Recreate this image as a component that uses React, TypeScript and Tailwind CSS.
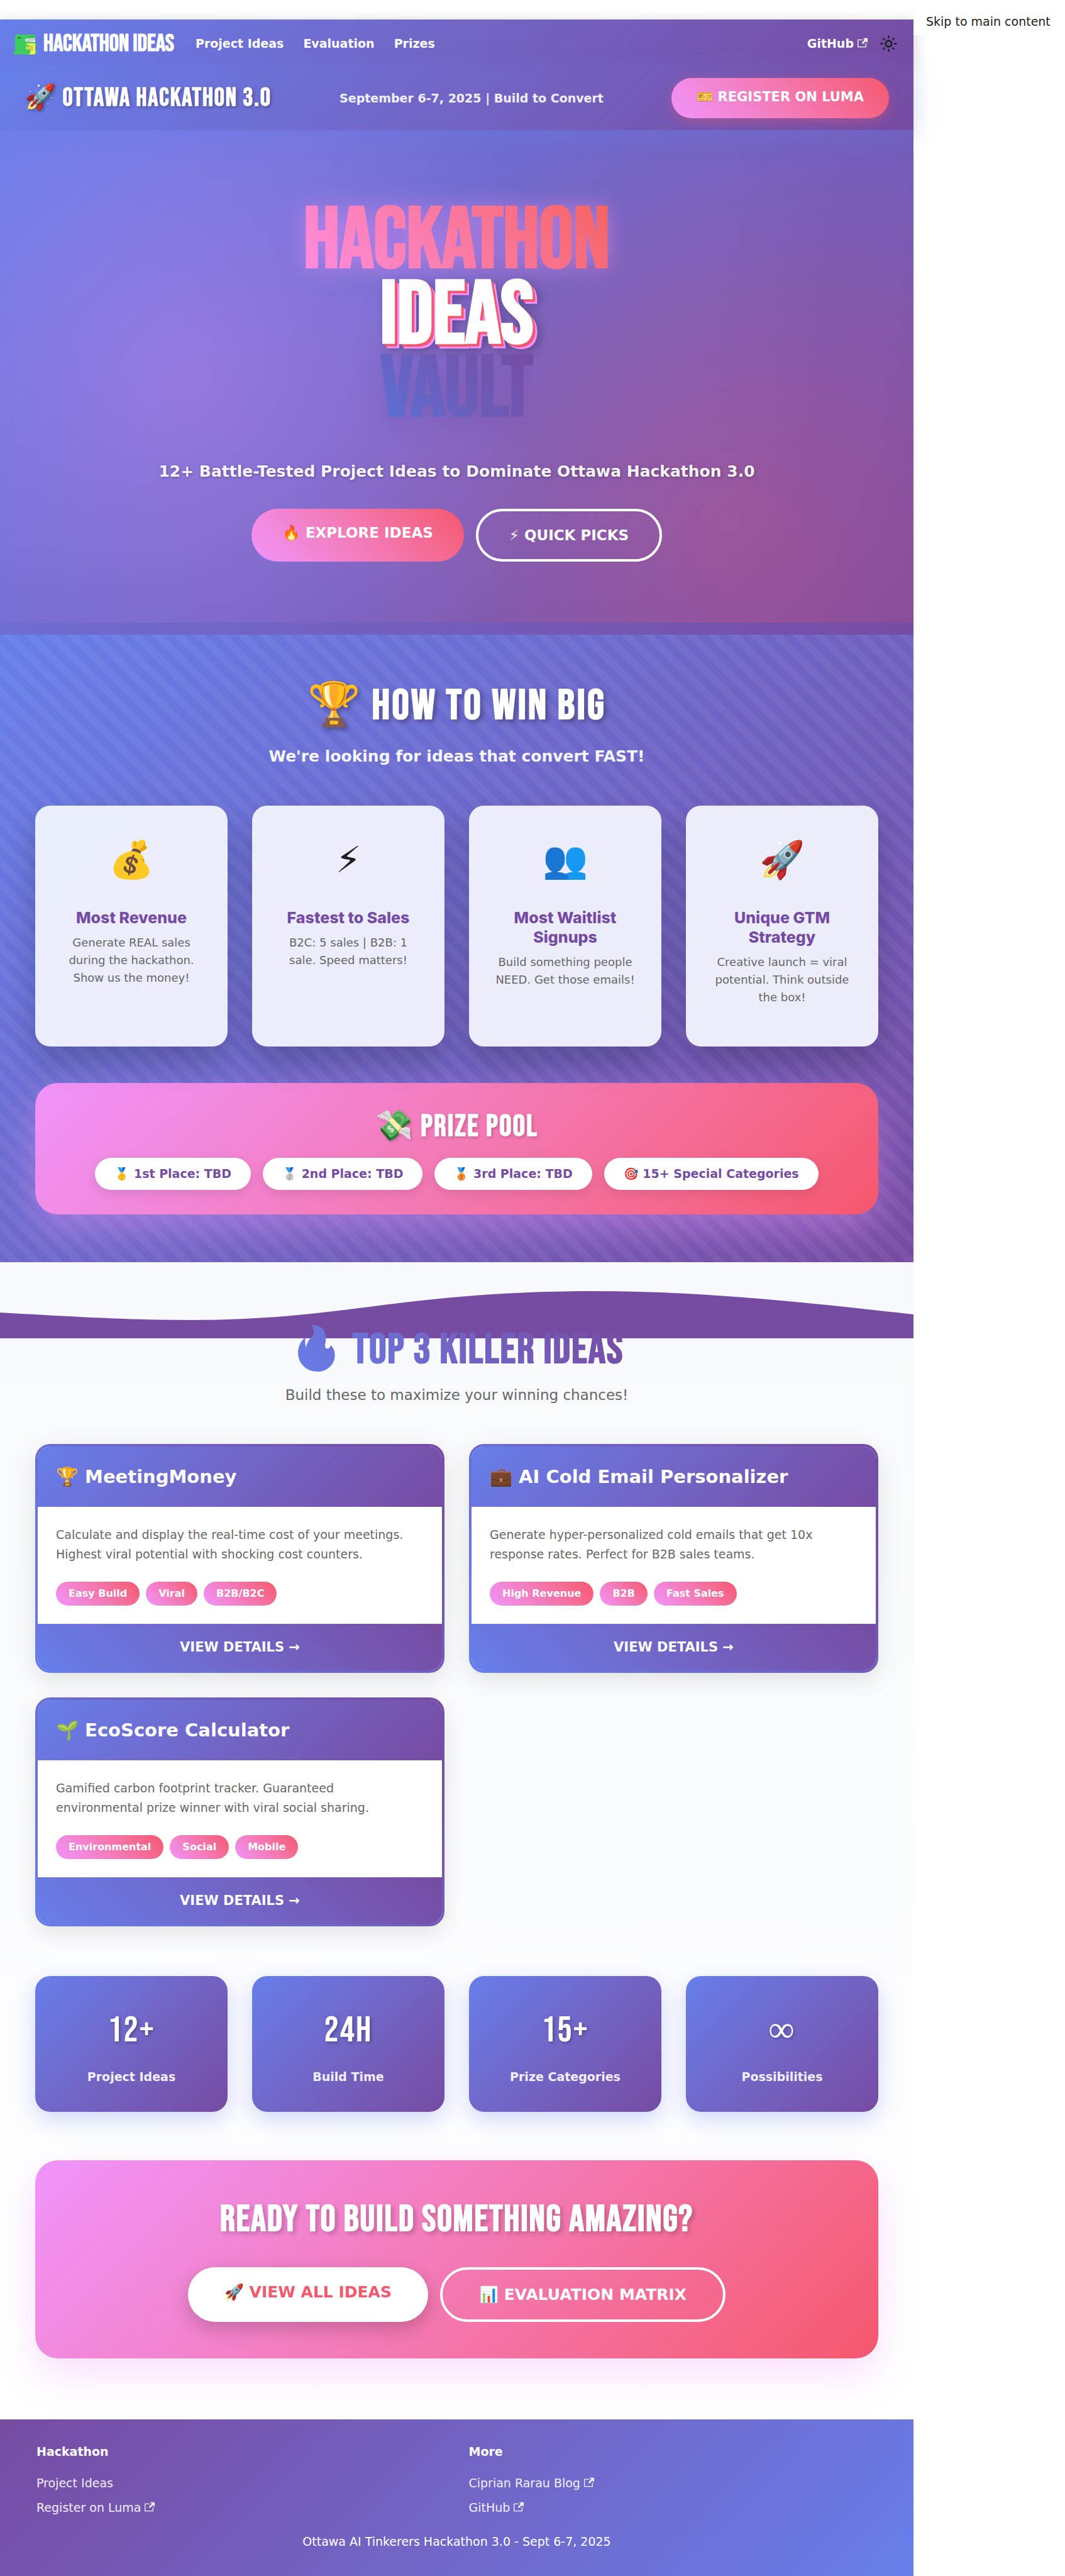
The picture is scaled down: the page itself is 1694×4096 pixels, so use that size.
function DinoLogo() {
  return (
    <svg viewBox="36 68 192 192" className="size-[39px]" aria-hidden="true">
      <path d="M57 104q0-12 12-12l3-3 4 3 4-3 4 3 4-3 4 3 4-3 4 3h101q12 0 12 12v20l-78 4v16h80v92q0 12-12 12H60q-14 0-18-12-2-6-5-8 2-6 9-2 6 4 9 4l3-6-4-4 4-4-4-4 4-4-4-4 4-4-4-4 4-4-4-4 4-4-4-4 4-4-4-4 4-4-4-4 4-4-4-4 4-4-4-4z" fill="#3ecc5f" />
      <path d="M213 162q11 4 9 16-1 10-9 12zM213 212q14 4 14 16 0 10-14 10z" fill="#44d860" />
      <path d="M135 248V160h78v76q0 12-12 12z" fill="#3ecc5f" />
      <path d="M142 162h66q4 0 4 5v72q0 8-7 8h-63z" fill="#ffff50" />
      <path d="M150 181h48M150 190h48M148 200h52M150 209h48M160 219h38" stroke="#36352f" strokeWidth="2" />
      <path d="M135 166q14 0 20 6 10 0 11 9-1 8-12 8-12 0-19-6z" fill="#44d860" />
      <path d="M133 214q8-8 20-7 22 2 23 20 0 20-24 21h-19z" fill="#3ecc5f" />
      <path d="M213 122l-70 4q-8 1-8 10 0 11 8 11l70 2z" fill="#fff" />
      <path d="M145 142l8-10 5 9 8-11 6 10 7-11 7 11 7-11 6 10 8-12 5 9" fill="none" stroke="#222" strokeWidth="2.5" />
      <path d="M77 125q1-12 11-12t11 11" fill="none" stroke="#111" strokeWidth="4" strokeLinecap="round" />
      <circle cx="173" cy="109" r="2.6" fill="#111" />
      <circle cx="193" cy="107" r="2.6" fill="#111" />
    </svg>
  );
}

function ExternalIcon() {
  return (
    <svg viewBox="0 0 24 24" className="ml-1.5 inline-block size-4 align-baseline" fill="currentColor" aria-hidden="true">
      <path d="M21 13v10h-21v-19h12v2h-10v15h17v-8h2zm3-12h-10.988l4.035 4-6.977 7.07 2.828 2.828 6.977-7.07 4.125 4.172v-11z" />
    </svg>
  );
}

function SunIcon() {
  return (
    <svg viewBox="0 0 24 24" className="size-[29px]" fill="currentColor" aria-hidden="true">
      <path d="M12,9c1.65,0,3,1.35,3,3s-1.35,3-3,3s-3-1.35-3-3S10.35,9,12,9 M12,7c-2.76,0-5,2.24-5,5s2.24,5,5,5s5-2.24,5-5 S14.76,7,12,7L12,7z M2,13l2,0c0.55,0,1-0.45,1-1s-0.45-1-1-1l-2,0c-0.55,0-1,0.45-1,1S1.45,13,2,13z M20,13l2,0c0.55,0,1-0.45,1-1 s-0.45-1-1-1l-2,0c-0.55,0-1,0.45-1,1S19.45,13,20,13z M11,2v2c0,0.55,0.45,1,1,1s1-0.45,1-1V2c0-0.55-0.45-1-1-1S11,1.45,11,2z M11,20v2c0,0.55,0.45,1,1,1s1-0.45,1-1v-2c0-0.55-0.45-1-1-1C11.45,19,11,19.45,11,20z M5.99,4.58c-0.39-0.39-1.03-0.39-1.41,0 c-0.39,0.39-0.39,1.03,0,1.41l1.06,1.06c0.39,0.39,1.03,0.39,1.41,0s0.39-1.03,0-1.41L5.99,4.58z M18.36,16.95 c-0.39-0.39-1.03-0.39-1.41,0c-0.39,0.39-0.39,1.03,0,1.41l1.06,1.06c0.39,0.39,1.03,0.39,1.41,0c0.39-0.39,0.39-1.03,0-1.41 L18.36,16.95z M19.42,5.99c0.39-0.39,0.39-1.03,0-1.41c-0.39-0.39-1.03-0.39-1.41,0l-1.06,1.06c-0.39,0.39-0.39,1.03,0,1.41 s1.03,0.39,1.41,0L19.42,5.99z M7.05,18.36c0.39-0.39,0.39-1.03,0-1.41c-0.39-0.39-1.03-0.39-1.41,0l-1.06,1.06 c-0.39,0.39-0.39,1.03,0,1.41s1.03,0.39,1.41,0L7.05,18.36z" />
    </svg>
  );
}

const criteria = [
  { icon: "💰", title: "Most Revenue", text: "Generate REAL sales during the hackathon. Show us the money!" },
  { icon: "⚡", title: "Fastest to Sales", text: "B2C: 5 sales | B2B: 1 sale. Speed matters!" },
  { icon: "👥", title: "Most Waitlist Signups", text: "Build something people NEED. Get those emails!" },
  { icon: "🚀", title: "Unique GTM Strategy", text: "Creative launch = viral potential. Think outside the box!" },
];

const prizes = ["🥇 1st Place: TBD", "🥈 2nd Place: TBD", "🥉 3rd Place: TBD", "🎯 15+ Special Categories"];

const ideas = [
  {
    title: "🏆 MeetingMoney",
    text: "Calculate and display the real-time cost of your meetings. Highest viral potential with shocking cost counters.",
    tags: ["Easy Build", "Viral", "B2B/B2C"],
  },
  {
    title: "💼 AI Cold Email Personalizer",
    text: "Generate hyper-personalized cold emails that get 10x response rates. Perfect for B2B sales teams.",
    tags: ["High Revenue", "B2B", "Fast Sales"],
  },
  {
    title: "🌱 EcoScore Calculator",
    text: "Gamified carbon footprint tracker. Guaranteed environmental prize winner with viral social sharing.",
    tags: ["Environmental", "Social", "Mobile"],
  },
];

const stats = [
  { value: "12+", label: "Project Ideas" },
  { value: "24H", label: "Build Time" },
  { value: "15+", label: "Prize Categories" },
  { value: <span className="font-['Liberation_Serif',serif] leading-none">∞</span>, label: "Possibilities" },
];

const footerColumns = [
  { title: "Hackathon", links: [{ label: "Project Ideas", external: false }, { label: "Register on Luma", external: true }] },
  { title: "More", links: [{ label: "Ciprian Rarau Blog", external: true }, { label: "GitHub", external: true }] },
];

function Navbar() {
  return (
    <nav className="flex items-center bg-linear-135 from-[#667eea] to-[#764ba2] px-5 pt-[19px] pb-[15px] text-[19px] leading-[31px] font-bold text-white shadow-[0_5px_24px_rgba(0,0,0,0.2)]">
      <a href="#home" className="flex items-center gap-[10px]">
        <DinoLogo />
        <span className="font-['Bebas_Neue',sans-serif] text-[38px] leading-[39px]">HACKATHON IDEAS</span>
      </a>
      <div className="ml-[34px] flex gap-[31px]">
        <a href="#ideas">Project Ideas</a>
        <a href="#evaluation">Evaluation</a>
        <a href="#prizes">Prizes</a>
      </div>
      <div className="ml-auto flex items-center gap-[19px]">
        <a href="#github">
          GitHub
          <ExternalIcon />
        </a>
        <button type="button" aria-label="Switch colour theme" className="mr-[5px] text-[#1c1e21]">
          <SunIcon />
        </button>
      </div>
    </nav>
  );
}

function Banner() {
  return (
    <div className="relative z-10 flex items-center justify-between bg-linear-135 from-[#667eea] to-[#764ba2] px-[39px] pt-5 pb-[19px] text-white shadow-[0_10px_36px_rgba(102,126,234,0.3)]">
      <p className="font-['Bebas_Neue',sans-serif] text-[40px] leading-[62px] font-bold tracking-wider text-shadow-[2px_2px_5px_rgba(0,0,0,0.3)]">
        🚀 OTTAWA HACKATHON 3.0
      </p>
      <p className="text-[19px] leading-[31px] font-bold text-white/90">September 6-7, 2025 | Build to Convert</p>
      <a
        href="#register"
        className="rounded-full bg-linear-45 from-[#f093fb] to-[#f5576c] px-10 pt-[12px] pb-[16px] text-[21px] leading-9 font-bold shadow-[0_5px_18px_rgba(245,87,108,0.4)]"
      >
        🎫 REGISTER ON LUMA
      </a>
    </div>
  );
}

function Hero() {
  return (
    <header className="relative bg-linear-135 from-[#667eea] to-[#764ba2] pt-[119px] pb-[116px] text-center text-white">
      <div className="absolute inset-x-0 top-0 bottom-[19px] bg-[radial-gradient(circle_at_20%_50%,rgba(240,147,251,0.3)_0%,transparent_50%),radial-gradient(circle_at_80%_80%,rgba(245,87,108,0.3)_0%,transparent_50%)]" />
      <div className="relative flex flex-col items-center">
        <h1 className="flex flex-col items-center font-['Bebas_Neue',sans-serif] text-[136px] leading-[118px] font-bold">
          <span className="bg-linear-45 from-[#ff8de2] to-[#f5625f] bg-clip-text text-transparent drop-shadow-[0_0_18px_rgba(240,147,251,0.5)]">HACKATHON</span>
          <span className="text-[141px] text-shadow-[4px_4px_0_#f5576c,7px_7px_0_#f093fb,10px_10px_18px_rgba(0,0,0,0.3)]">IDEAS</span>
          <span className="bg-linear-45 from-[#5872d8] via-[#6c5dbb] to-[#764ba2] bg-clip-text text-transparent drop-shadow-[0_10px_18px_rgba(60,40,120,0.15)]">VAULT</span>
        </h1>
        <p className="mt-[49px] text-[25px] leading-[41px] font-bold text-white/95 text-shadow-[1px_1px_4px_rgba(0,0,0,0.3)]">
          12+ Battle-Tested Project Ideas to Dominate Ottawa Hackathon 3.0
        </p>
        <div className="mt-[39px] flex gap-[19px] text-[23px] leading-[38px] font-bold">
          <a href="#ideas" className="rounded-full bg-linear-45 from-[#f093fb] to-[#f5576c] px-[49px] py-[19px]">
            🔥 EXPLORE IDEAS
          </a>
          <a href="#quick-picks" className="rounded-full border-4 border-white px-[49px] py-[19px]">
            ⚡ QUICK PICKS
          </a>
        </div>
      </div>
    </header>
  );
}

function Criteria() {
  return (
    <section
      id="evaluation"
      className="bg-[repeating-linear-gradient(45deg,transparent_0,transparent_12px,rgba(255,255,255,0.05)_12px,rgba(255,255,255,0.05)_24px),linear-gradient(135deg,#667eea,#764ba2)] px-14 pt-[71px] pb-[76px] text-center"
    >
      <h2 className="font-['Bebas_Neue',sans-serif] text-[68px] leading-[85px] font-bold tracking-wider text-white text-shadow-[4px_4px_7px_rgba(0,0,0,0.3)]">
        🏆 HOW TO WIN BIG
      </h2>
      <p className="mt-[17px] text-[25px] leading-[41px] font-bold text-white/95">We're looking for ideas that convert FAST!</p>
      <div className="mt-[58px] grid grid-cols-4 gap-[39px]">
        {criteria.map((item) => (
          <article key={item.title} className="min-h-[383px] rounded-3xl bg-[#f0f2fd]/97 px-[39px] pt-[39px] shadow-[0_24px_48px_rgba(0,0,0,0.2)]">
            <div className="mb-[29px] text-[58px] leading-[95px] text-[#1c1e21]">{item.icon}</div>
            <h3 className="font-[Inter,sans-serif] text-[25px] leading-[31px] font-extrabold text-[#764ba2]">{item.title}</h3>
            <p className="mt-[10px] text-[18px] leading-7 text-[#666]">{item.text}</p>
          </article>
        ))}
      </div>
      <div id="prizes" className="mt-[58px] rounded-[36px] bg-linear-135 from-[#f093fb] to-[#f5576c] p-[39px] shadow-[0_24px_60px_rgba(240,147,251,0.4)]">
        <h3 className="mb-[19px] font-['Bebas_Neue',sans-serif] text-[48px] leading-[61px] font-bold tracking-wider text-white text-shadow-[2px_2px_5px_rgba(0,0,0,0.2)]">
          💸 PRIZE POOL
        </h3>
        <ul className="flex flex-wrap justify-center gap-[19px] text-[19px] leading-[31px] font-bold text-[#764ba2]">
          {prizes.map((prize) => (
            <li key={prize} className="rounded-full bg-white px-[31px] py-[10px] shadow-[0_6px_18px_rgba(0,0,0,0.1)]">
              {prize}
            </li>
          ))}
        </ul>
      </div>
    </section>
  );
}

function IdeaCard({ title, text, tags }: { title: string; text: string; tags: string[] }) {
  return (
    <article className="flex flex-col overflow-hidden rounded-3xl border-4 border-transparent [background:linear-gradient(#fff,#fff)_padding-box,linear-gradient(45deg,#667eea,#764ba2)_border-box] shadow-[0_12px_36px_rgba(0,0,0,0.1)]">
      <h3 className="bg-linear-135 from-[#667eea] to-[#764ba2] px-[29px] py-6 text-[29px] leading-[48px] font-bold text-white">{title}</h3>
      <div className="flex-1 p-[29px]">
        <p className="text-[19px] leading-[31px] text-[#666]">{text}</p>
        <ul className="mt-7 flex flex-wrap gap-[10px] text-[16px] leading-[26px] font-bold text-white">
          {tags.map((tag) => (
            <li key={tag} className="rounded-full bg-linear-45 from-[#f093fb] to-[#f5576c] px-5 py-[6px]">
              {tag}
            </li>
          ))}
        </ul>
      </div>
      <a href="#details" className="bg-linear-45 from-[#667eea] to-[#764ba2] py-[19px] text-center text-[21px] leading-9 font-bold text-white">
        VIEW DETAILS →
      </a>
    </article>
  );
}

function Ideas() {
  return (
    <main id="ideas" className="relative bg-linear-to-b from-[#f8f9fc] to-white px-14 py-[97px]">
      <svg viewBox="0 0 1453 121" preserveAspectRatio="none" className="absolute inset-x-0 top-0 h-[121px] w-full" fill="#764ba2" aria-hidden="true">
        <path d="M0 80C110 86 200 92 304 92C550 92 642 46 948 46C1140 46 1310 68 1453 83V121H0Z" />
      </svg>
      <div className="relative">
        <div className="flex flex-col items-center text-center">
          <h2 className="bg-linear-45 from-[#667eea] to-[#764ba2] bg-clip-text font-['Bebas_Neue',sans-serif] text-[68px] leading-[85px] font-bold tracking-[2px] text-transparent">
            🔥 TOP 3 KILLER IDEAS
          </h2>
          <p className="mt-[10px] text-[23px] leading-[38px] text-[#666]">Build these to maximize your winning chances!</p>
        </div>
        <div className="mt-[59px] grid grid-cols-2 gap-[39px]">
          {ideas.map((idea) => (
            <IdeaCard key={idea.title} {...idea} />
          ))}
        </div>
        <dl className="mt-[79px] grid grid-cols-4 gap-[39px] text-center text-white">
          {stats.map((stat) => (
            <div
              key={stat.label}
              className="flex flex-col-reverse gap-[10px] rounded-3xl bg-linear-135 from-[#667eea] to-[#764ba2] pt-[39px] pb-10 shadow-[0_12px_36px_rgba(102,126,234,0.3)]"
            >
              <dt className="text-[19px] leading-[31px] font-bold text-white/90">{stat.label}</dt>
              <dd className="font-['Bebas_Neue',sans-serif] text-[58px] leading-[96px] tracking-[2px] text-shadow-[2px_2px_5px_rgba(0,0,0,0.3)]">{stat.value}</dd>
            </div>
          ))}
        </dl>
        <section className="mt-[77px] flex flex-col items-center rounded-[36px] bg-linear-135 from-[#f093fb] to-[#f5576c] py-[58px] text-white shadow-[0_24px_60px_rgba(240,147,251,0.3)]">
          <h2 className="mb-[39px] font-['Bebas_Neue',sans-serif] text-[59px] leading-[73px] font-bold tracking-[2px] text-shadow-[4px_4px_7px_rgba(0,0,0,0.2)]">
            READY TO BUILD SOMETHING AMAZING?
          </h2>
          <div className="flex gap-[19px] text-[25px] leading-[41px] font-bold">
            <a href="#all-ideas" className="rounded-full bg-white px-[58px] py-[19px] text-[#f5576c] shadow-[0_10px_30px_rgba(0,0,0,0.2)]">
              🚀 VIEW ALL IDEAS
            </a>
            <a href="#matrix" className="rounded-full border-4 border-white px-[58px] py-[19px]">
              📊 EVALUATION MATRIX
            </a>
          </div>
        </section>
      </div>
    </main>
  );
}

function Footer() {
  return (
    <footer className="bg-linear-135 from-[#764ba2] to-[#667eea] p-[39px] text-[19px] text-white">
      <div className="grid grid-cols-2">
        {footerColumns.map((column) => (
          <div key={column.title} className="px-[19px]">
            <h4 className="mb-[19px] leading-6 font-bold">{column.title}</h4>
            <ul className="leading-[39px] text-white/90">
              {column.links.map((link) => (
                <li key={link.label} className="h-[39px]">
                  <a href="#link">
                    {link.label}
                    {link.external && <ExternalIcon />}
                  </a>
                </li>
              ))}
            </ul>
          </div>
        ))}
      </div>
      <p className="mt-[19px] text-center leading-[31px]">Ottawa AI Tinkerers Hackathon 3.0 - Sept 6-7, 2025</p>
    </footer>
  );
}

export default function App() {
  return (
    <div className="flex items-start bg-white font-['DejaVu_Sans',sans-serif]">
      <div className="min-w-0 flex-1 pt-[31px]">
        <Navbar />
        <Banner />
        <Hero />
        <Criteria />
        <Ideas />
        <Footer />
      </div>
      <a href="#ideas" className="relative z-20 mt-[13px] w-[241px] shrink-0 bg-white px-5 py-[6px] text-[19px] leading-[31px] text-[#1c1e21]">
        Skip to main content
      </a>
    </div>
  );
}
